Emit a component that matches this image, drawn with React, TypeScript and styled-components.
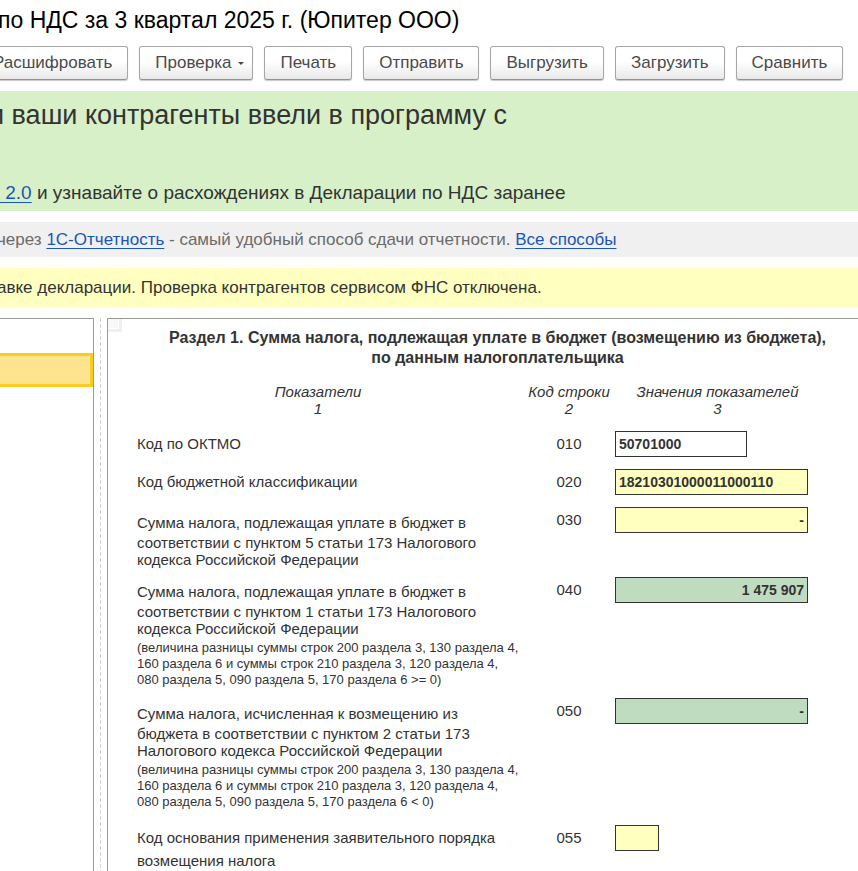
import React from "react";
import styled, { createGlobalStyle } from "styled-components";

const GlobalStyle = createGlobalStyle`
  *, *::before, *::after { box-sizing: border-box; }
  body {
    margin: 0;
    background: #fff;
    color: #333;
    font-family: "Liberation Sans", Arial, sans-serif;
    overflow: hidden;
  }
`;

const Page = styled.div`
  display: flex;
  flex-direction: column;
  height: 100vh;
  overflow: hidden;
  white-space: nowrap;
`;

const Title = styled.h1`
  margin: 0 0 6px -2px;
  font-size: 23px;
  font-weight: 400;
  line-height: 40px;
  color: #000;
`;

const Toolbar = styled.div`
  display: flex;
  gap: 11px;
  margin: 0 0 11px -23px;
`;

const ToolButton = styled.button<{ $menu?: boolean }>`
  display: inline-flex;
  align-items: center;
  gap: 7px;
  flex: none;
  height: 34px;
  padding: 0 ${(p) => (p.$menu ? 8 : 15)}px 0 15px;
  border: 1px solid #a6a6a6;
  border-bottom-color: #929292;
  border-radius: 3px;
  background: linear-gradient(#fff 45%, #e9e9e9);
  box-shadow: 0 1px 1px #c8c8c8;
  color: #4a4a4a;
  font-family: inherit;
  font-size: 17px;
`;

const Link = styled.a`
  color: #1a55b8;
  text-decoration: underline;
  text-underline-offset: 3px;
`;

const Promo = styled.section`
  display: flex;
  flex-direction: column;
  justify-content: space-between;
  flex: none;
  height: 120px;
  margin-bottom: 11px;
  background: #d7f0c8;
`;

const PromoHeading = styled.p`
  margin: 0 0 0 -11px;
  font-size: 27px;
  line-height: 48px;
`;

const PromoText = styled.p`
  margin: 0;
  font-size: 19px;
  line-height: 36px;
`;

const Notice = styled.section<{ $tone: "gray" | "yellow" }>`
  flex: none;
  margin: 0 0 11px -3px;
  font-size: 17px;
  line-height: ${(p) => (p.$tone === "gray" ? 35 : 39)}px;
  background: ${(p) => (p.$tone === "gray" ? "#f0f0f0" : "#ffffc0")};
  color: ${(p) => (p.$tone === "gray" ? "#6b6b6b" : "#333")};
`;

const Workspace = styled.main`
  display: flex;
  flex: 1;
  min-height: 0;
`;

const Sections = styled.nav`
  flex: none;
  width: 94px;
  padding-top: 34px;
  border: solid #999;
  border-width: 1px 1px 0 0;
`;

const SelectedSection = styled.button`
  display: block;
  width: 100%;
  height: 34px;
  border: 3px solid #fbcb22;
  border-left: 0;
  background: #ffe48f;
`;

const Splitter = styled.div`
  flex: none;
  width: 1px;
  margin: 0 6px;
  background: repeating-linear-gradient(#d3d3d3 0 4px, #fff 4px 6px);
`;

const Sheet = styled.section`
  position: relative;
  flex: 1;
  min-width: 0;
  padding: 9px 0 0 29px;
  border: solid #999;
  border-width: 1px 0 0 1px;
  overflow: hidden;
`;

const Corner = styled.span`
  position: absolute;
  top: 0;
  left: 0;
  width: 14px;
  height: 13px;
  border: solid #f0f0f0;
  border-width: 0 3px 3px 0;
  background: #f8f8f8;
  box-shadow: inset -1px -1px #fff;
`;

const SheetTitle = styled.h2`
  margin: 0 0 15px;
  font-size: 16px;
  line-height: 20px;
  text-align: center;
`;

const FormTable = styled.table`
  width: calc(100% - 38px);
  table-layout: fixed;
  border-collapse: collapse;
  font-size: 15px;

  th, td { padding: 0; vertical-align: top; }
`;

const Column = styled.col<{ $width?: number }>`
  width: ${(p) => (p.$width ? `${p.$width}px` : "auto")};
`;

const HeadCell = styled.th`
  height: 48px;
  font-weight: 400;
  font-style: italic;
  line-height: 17px;

  &:first-child > span { margin-right: 29px; }
  &:nth-child(2) > span { margin-right: 5px; }
  > span { display: block; }
`;

const Row = styled.tr<{ $height: number }>`
  height: ${(p) => p.$height}px;
`;

const Label = styled.label<{ $top: number; $lead: number; $line: number }>`
  display: block;
  padding-top: ${(p) => p.$top}px;
  line-height: ${(p) => p.$line}px;

  > span { display: block; }
  > span:first-child { line-height: ${(p) => p.$lead}px; }
`;

const Note = styled.small`
  display: block;
  margin-top: 3px;
  font-size: 13px;
  line-height: 16px;
  white-space: pre-line;
`;

const Code = styled.td`
  line-height: 26px;
  text-align: center;

  > span { display: block; margin-right: 5px; }
`;

const Field = styled.input<{ $width: number; $fill: string; $numeric?: boolean }>`
  display: block;
  width: ${(p) => p.$width}px;
  height: 26px;
  padding: 0 3px;
  border: 1px solid #333;
  border-radius: 0;
  background: ${(p) => p.$fill};
  color: #333;
  font: bold 14px "Liberation Sans", Arial, sans-serif;
  text-align: ${(p) => (p.$numeric ? "right" : "left")};
`;

const YELLOW = "#ffffc0";
const GREEN = "#c0dcc0";

const rows = [
  { code: "010", height: 38, top: 0, lead: 26, line: 17, lines: ["Код по ОКТМО"], value: "50701000", width: 132, fill: "#fff" },
  { code: "020", height: 38, top: 0, lead: 26, line: 17, lines: ["Код бюджетной классификации"], value: "18210301000011000110", width: 193, fill: YELLOW },
  {
    code: "030", height: 70, top: 5, lead: 22, line: 17,
    lines: ["Сумма налога, подлежащая уплате в бюджет в", "соответствии с пунктом 5 статьи 173 Налогового", "кодекса Российской Федерации"],
    value: "-", width: 193, fill: YELLOW, numeric: true,
  },
  {
    code: "040", height: 121, top: 4, lead: 22, line: 17,
    lines: ["Сумма налога, подлежащая уплате в бюджет в", "соответствии с пунктом 1 статьи 173 Налогового", "кодекса Российской Федерации"],
    note: "(величина разницы суммы строк 200 раздела 3, 130 раздела 4,\n160 раздела 6 и суммы строк 210 раздела 3, 120 раздела 4,\n080 раздела 5, 090 раздела 5, 170 раздела 6 >= 0)",
    value: "1 475 907", width: 193, fill: GREEN, numeric: true,
  },
  {
    code: "050", height: 127, top: 5, lead: 22, line: 17,
    lines: ["Сумма налога, исчисленная к возмещению из", "бюджета в соответствии с пунктом 2 статьи 173", "Налогового кодекса Российской Федерации"],
    note: "(величина разницы суммы строк 200 раздела 3, 130 раздела 4,\n160 раздела 6 и суммы строк 210 раздела 3, 120 раздела 4,\n080 раздела 5, 090 раздела 5, 170 раздела 6 < 0)",
    value: "-", width: 193, fill: GREEN, numeric: true,
  },
  {
    code: "055", height: 46, top: 0, lead: 26, line: 20,
    lines: ["Код основания применения заявительного порядка", "возмещения налога"],
    value: "", width: 44, fill: YELLOW,
  },
];

const heads = [["Показатели", "1"], ["Код строки", "2"], ["Значения показателей", "3"]];

export default function App() {
  return (
    <Page>
      <GlobalStyle />
      <Title>по НДС за 3 квартал 2025 г. (Юпитер ООО)</Title>
      <Toolbar>
        <ToolButton>Расшифровать</ToolButton>
        <ToolButton $menu>
          Проверка
          <svg width="6" height="4" viewBox="0 0 6 4" aria-hidden="true">
            <path d="M0 1h6L3 4z" fill="#4a4a4a" />
          </svg>
        </ToolButton>
        <ToolButton>Печать</ToolButton>
        <ToolButton>Отправить</ToolButton>
        <ToolButton>Выгрузить</ToolButton>
        <ToolButton>Загрузить</ToolButton>
        <ToolButton>Сравнить</ToolButton>
      </Toolbar>
      <Promo>
        <PromoHeading>и ваши контрагенты ввели в программу с</PromoHeading>
        <PromoText>
          <Link href="#service">&nbsp;2.0</Link> и узнавайте о расхождениях в Декларации по НДС заранее
        </PromoText>
      </Promo>
      <Notice $tone="gray">
        через <Link href="#reporting">1С-Отчетность</Link> - самый удобный способ сдачи отчетности.{" "}
        <Link href="#methods">Все способы</Link>
      </Notice>
      <Notice $tone="yellow">авке декларации. Проверка контрагентов сервисом ФНС отключена.</Notice>
      <Workspace>
        <Sections aria-label="Разделы">
          <SelectedSection aria-label="Раздел 1" aria-current="true" />
        </Sections>
        <Splitter />
        <Sheet>
          <Corner />
          <SheetTitle>
            Раздел 1. Сумма налога, подлежащая уплате в бюджет (возмещению из бюджета),
            <br />
            по данным налогоплательщика
          </SheetTitle>
          <FormTable>
            <colgroup>
              <Column />
              <Column $width={87} />
              <Column $width={205} />
            </colgroup>
            <thead>
              <tr>
                {heads.map(([name, number]) => (
                  <HeadCell key={number} scope="col">
                    <span>{name}</span>
                    <span>{number}</span>
                  </HeadCell>
                ))}
              </tr>
            </thead>
            <tbody>
              {rows.map((row) => (
                <Row key={row.code} $height={row.height}>
                  <td>
                    <Label htmlFor={`line-${row.code}`} $top={row.top} $lead={row.lead} $line={row.line}>
                      {row.lines.map((text) => (
                        <span key={text}>{text}</span>
                      ))}
                      {row.note && <Note>{row.note}</Note>}
                    </Label>
                  </td>
                  <Code>
                    <span>{row.code}</span>
                  </Code>
                  <td>
                    <Field
                      id={`line-${row.code}`}
                      defaultValue={row.value}
                      $width={row.width}
                      $fill={row.fill}
                      $numeric={row.numeric}
                    />
                  </td>
                </Row>
              ))}
            </tbody>
          </FormTable>
        </Sheet>
      </Workspace>
    </Page>
  );
}
